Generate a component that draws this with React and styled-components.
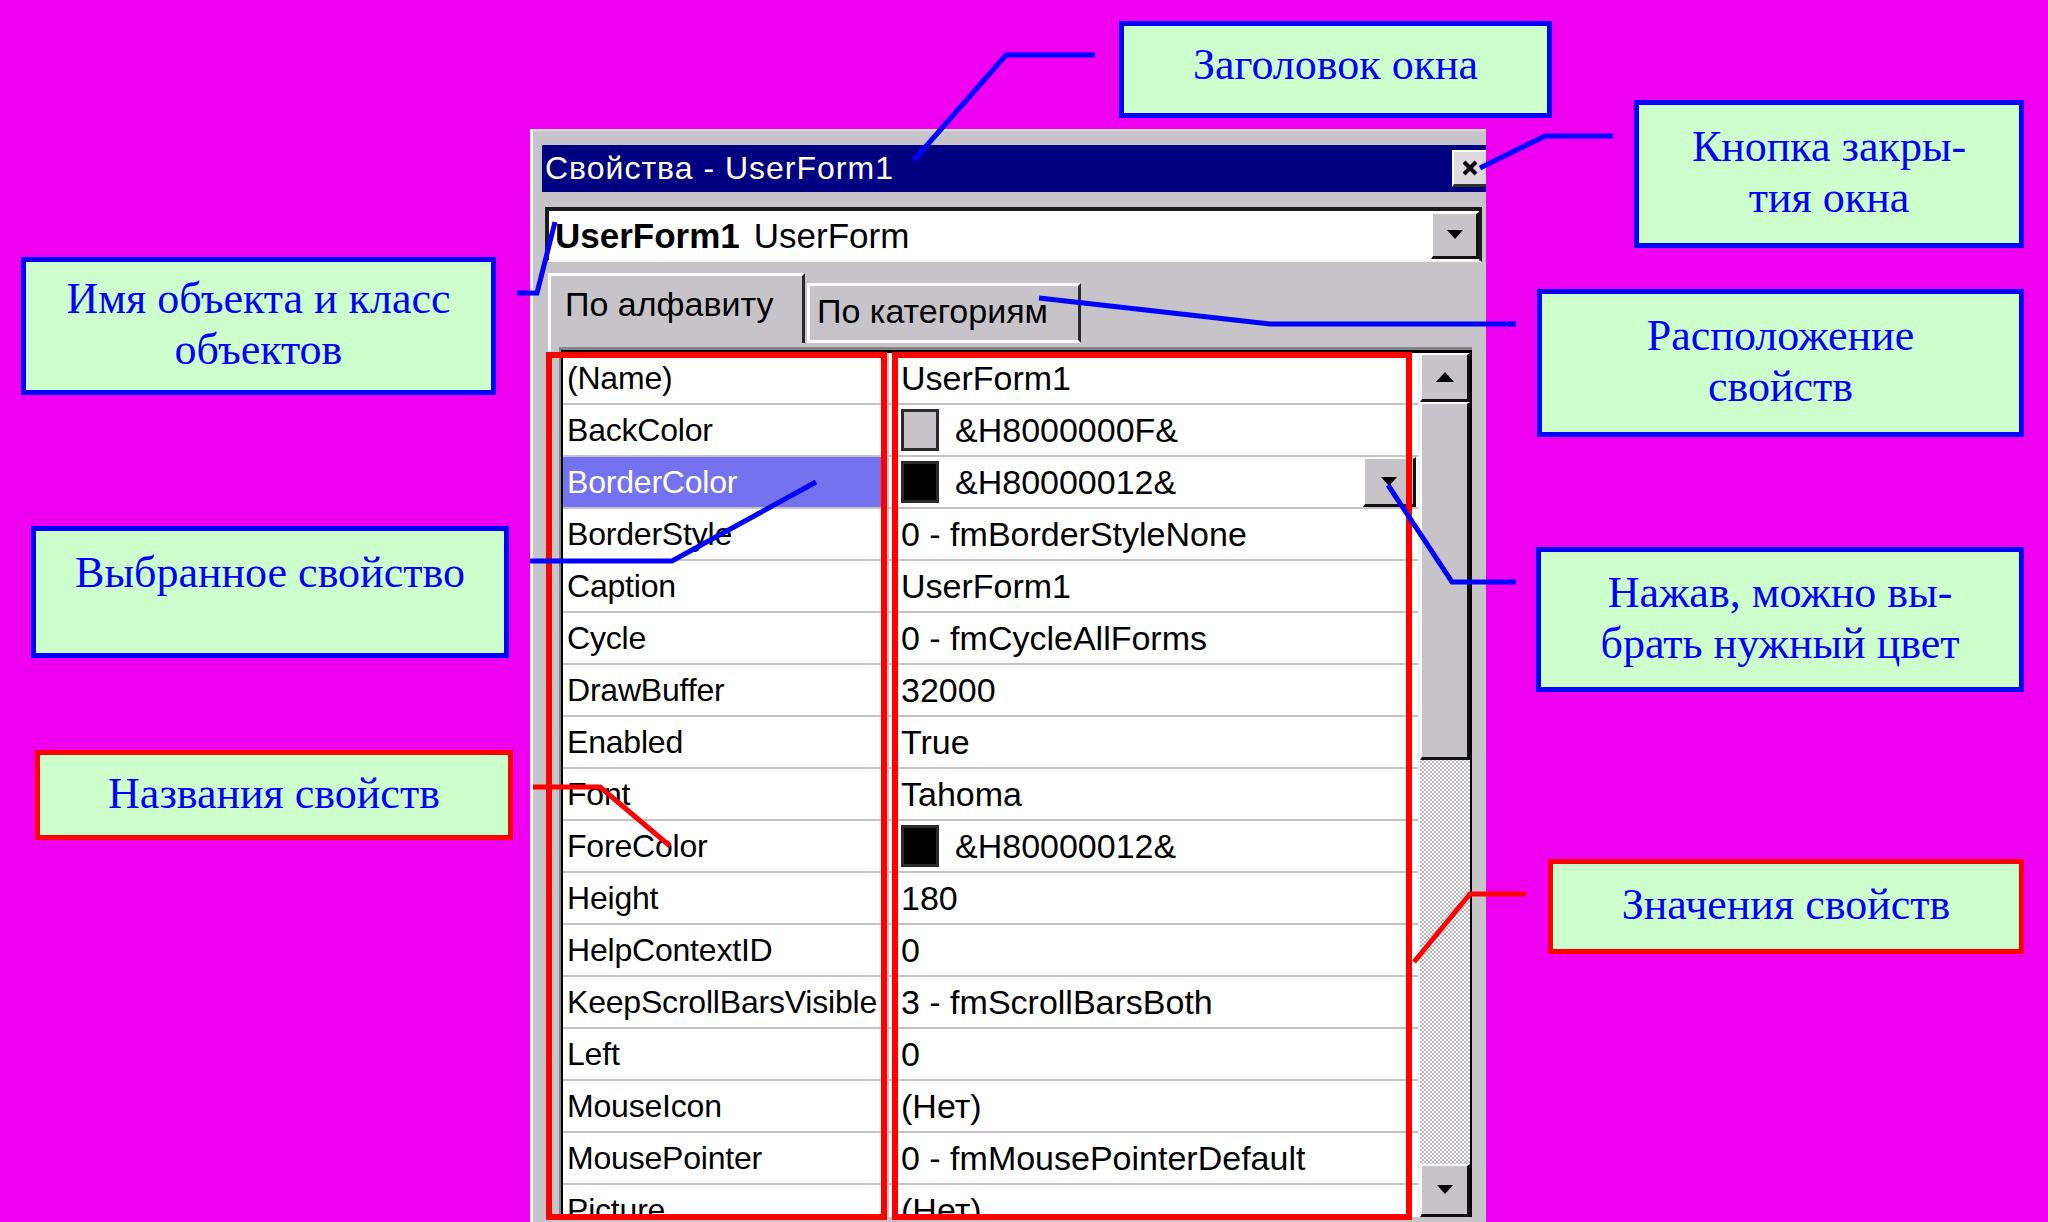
import React from 'react'
import styled, { createGlobalStyle } from 'styled-components'

const GlobalStyle = createGlobalStyle`
  html, body {
    margin: 0;
    padding: 0;
    background: #f000f0;
  }
  body {
    width: 2048px;
    height: 1222px;
    overflow: hidden;
  }
`

const ui = `"Liberation Sans", Arial, sans-serif`
const grey = '#c6c3c9'

const Stage = styled.div`
    position: relative;
    width: 2048px;
    height: 1222px;
    box-sizing: border-box;
    padding: 129px 0 0 530px;
    overflow: hidden;
    background: #f000f0;
`

const Window = styled.div`
    width: 956px;
    height: 1110px;
    box-sizing: border-box;
    display: flex;
    flex-direction: column;
    padding: 14px 0 0 9px;
    background: ${grey};
    border-top: 2px solid #dedce2;
    border-left: 3px solid #f4f3f6;
    font-family: ${ui};
    font-size: 34px;
    color: #000;
`

const TitleBar = styled.div`
    height: 47px;
    display: flex;
    align-items: center;
    justify-content: space-between;
    padding-left: 3px;
    background: #000080;
`

const TitleText = styled.span`
    color: #fff;
    font-size: 32px;
    letter-spacing: 1px;
    white-space: nowrap;
`

const CloseButton = styled.div`
    width: 34px;
    height: 37px;
    box-sizing: border-box;
    display: flex;
    align-items: center;
    justify-content: center;
    background: #dcdadf;
    border-top: 2px solid #fff;
    border-left: 2px solid #fff;
    border-bottom: 3px solid #303030;
`

const Combo = styled.div`
    height: 55px;
    margin: 15px 4px 0 3px;
    box-sizing: border-box;
    display: flex;
    align-items: center;
    background: #fff;
    font-size: 35px;
    border-top: 4px solid #1c1c1c;
    border-left: 4px solid #1c1c1c;
    border-right: 3px solid #1c1c1c;
    border-bottom: 2px solid #f4f3f6;
`

const ComboName = styled.span`
    padding-left: 6px;
    font-weight: 700;
    white-space: nowrap;
`

const ComboClass = styled.span`
    padding-left: 14px;
    white-space: nowrap;
`

const RaisedButton = styled.div`
    box-sizing: border-box;
    display: flex;
    align-items: center;
    justify-content: center;
    background: ${grey};
    border-top: 2px solid #fff;
    border-left: 2px solid #fff;
    border-right: 3px solid #111;
    border-bottom: 3px solid #111;
`

const ComboButton = styled(RaisedButton)`
    margin-left: auto;
    width: 48px;
    height: 47px;
`

const TabStrip = styled.div`
    height: 70px;
    margin: 11px 0 0 6px;
    display: flex;
    align-items: flex-end;
`

const Tab = styled.div`
    width: ${(p) => p.$w}px;
    height: ${(p) => (p.$active ? 70 : 60)}px;
    box-sizing: border-box;
    display: flex;
    align-items: center;
    padding: 0 0 ${(p) => (p.$active ? 10 : 4)}px ${(p) => (p.$active ? 14 : 7)}px;
    margin-left: ${(p) => (p.$active ? 0 : 2)}px;
    background: ${grey};
    border-top: 3px solid #fff;
    border-left: 3px solid #fff;
    border-right: 3px solid #2a2a2a;
    border-bottom: ${(p) => (p.$active ? 'none' : '3px solid #fff')};
    white-space: nowrap;
`

const Panel = styled.div`
    margin: 0 14px 0 6px;
    padding: 4px 0 0 8px;
    border-left: 3px solid #fff;
`

const Grid = styled.div`
    border-top: 3px solid #858288;
    border-left: 2px solid #858288;
`

const Frame = styled.div`
    height: 864px;
    display: flex;
    border-top: 3px solid #000;
    border-left: 2px solid #000;
    border-right: 2px solid #000;
    overflow: hidden;
`

const Table = styled.div`
    flex: 1;
    background: #fff;
    overflow: hidden;
`

const Row = styled.div`
    height: 52px;
    box-sizing: border-box;
    display: grid;
    grid-template-columns: 326px 1fr;
    border-bottom: 2px solid #c4c1c8;
`

const NameCell = styled.div`
    display: flex;
    align-items: center;
    padding-left: 4px;
    overflow: hidden;
    white-space: nowrap;
    font-size: 32px;
    letter-spacing: -0.2px;
    border-right: 3px solid #c4c1c8;
    background: ${(p) => (p.$selected ? '#7472ee' : '#fff')};
    color: ${(p) => (p.$selected ? '#fff' : '#000')};
`

const ValueCell = styled.div`
    display: flex;
    align-items: center;
    gap: 16px;
    padding-left: 12px;
    white-space: nowrap;
    overflow: hidden;
`

const Swatch = styled.span`
    width: 38px;
    height: 42px;
    box-sizing: border-box;
    flex-shrink: 0;
    background: ${(p) => p.$color};
    border: 3px solid #2a2a2a;
`

const CellButton = styled(RaisedButton)`
    margin-left: auto;
    margin-right: 2px;
    width: 53px;
    height: 50px;
`

const Scrollbar = styled.div`
    width: 50px;
    display: flex;
    flex-direction: column;
    background: repeating-conic-gradient(#ffffff 0 25%, #b9b6bd 0 50%) 0 0 / 4px 4px;
    border-left: 2px solid #f0eff2;
`

const ScrollButton = styled(RaisedButton)`
    height: ${(p) => p.$h}px;
    flex-shrink: 0;
`

const Thumb = styled(RaisedButton)`
    height: 358px;
    flex-shrink: 0;
`

const Track = styled.div`
    flex: 1;
`

const Callout = styled.div`
    position: absolute;
    left: ${(p) => p.$x}px;
    top: ${(p) => p.$y}px;
    width: ${(p) => p.$w}px;
    height: ${(p) => p.$h}px;
    box-sizing: border-box;
    display: flex;
    align-items: center;
    justify-content: center;
    padding-bottom: ${(p) => p.$lift || 4}px;
    background: #ccffcc;
    border: 5px solid ${(p) => (p.$tone === 'red' ? '#ff0000' : '#0000ff')};
    font-family: "Liberation Serif", "Times New Roman", serif;
    font-size: 44px;
    line-height: 51px;
    color: #0000ff;
    text-align: center;
    white-space: pre-line;
`

const Overlay = styled.svg`
    position: absolute;
    left: 0;
    top: 0;
    width: 2048px;
    height: 1222px;
    pointer-events: none;
`

const DownArrow = () => (
    <svg width="16" height="10" viewBox="0 0 16 10">
        <polygon points="0,0 16,0 8,9" fill="#000" />
    </svg>
)

const UpArrow = () => (
    <svg width="18" height="10" viewBox="0 0 18 10">
        <polygon points="0,10 18,10 9,0" fill="#000" />
    </svg>
)

const CloseIcon = () => (
    <svg width="16" height="16" viewBox="0 0 16 16">
        <path d="M2 2 L14 14 M14 2 L2 14" stroke="#000" strokeWidth="4" />
    </svg>
)

const properties = [
    { name: '(Name)', value: 'UserForm1' },
    { name: 'BackColor', value: '&H8000000F&', swatch: '#c6c3c9' },
    { name: 'BorderColor', value: '&H80000012&', swatch: '#000', selected: true },
    { name: 'BorderStyle', value: '0 - fmBorderStyleNone' },
    { name: 'Caption', value: 'UserForm1' },
    { name: 'Cycle', value: '0 - fmCycleAllForms' },
    { name: 'DrawBuffer', value: '32000' },
    { name: 'Enabled', value: 'True' },
    { name: 'Font', value: 'Tahoma' },
    { name: 'ForeColor', value: '&H80000012&', swatch: '#000' },
    { name: 'Height', value: '180' },
    { name: 'HelpContextID', value: '0' },
    { name: 'KeepScrollBarsVisible', value: '3 - fmScrollBarsBoth' },
    { name: 'Left', value: '0' },
    { name: 'MouseIcon', value: '(Нет)' },
    { name: 'MousePointer', value: '0 - fmMousePointerDefault' },
    { name: 'Picture', value: '(Нет)' },
]

const callouts = [
    { text: 'Заголовок окна', x: 1119, y: 21, w: 433, h: 97, lift: 10 },
    { text: 'Кнопка закры-\nтия окна', x: 1634, y: 100, w: 390, h: 148 },
    { text: 'Имя объекта и класс\nобъектов', x: 21, y: 257, w: 475, h: 138 },
    { text: 'Расположение\nсвойств', x: 1537, y: 289, w: 487, h: 148 },
    { text: 'Выбранное свойство', x: 31, y: 526, w: 478, h: 132, lift: 40 },
    { text: 'Нажав, можно вы-\nбрать нужный цвет', x: 1536, y: 547, w: 488, h: 145 },
    { text: 'Названия свойств', x: 35, y: 750, w: 478, h: 90, tone: 'red' },
    { text: 'Значения свойств', x: 1548, y: 859, w: 476, h: 95, tone: 'red' },
]

const leaders = [
    { points: '1095,55 1006,55 914,160', color: '#0000ff' },
    { points: '1613,136 1545,136 1480,168', color: '#0000ff' },
    { points: '517,293 537,293 555,222', color: '#0000ff' },
    { points: '1516,324 1270,324 1039,298', color: '#0000ff' },
    { points: '530,561 672,561 816,482', color: '#0000ff' },
    { points: '1516,582 1452,582 1388,485', color: '#0000ff' },
    { points: '533,787 600,787 670,846', color: '#ff0000' },
    { points: '1526,894 1470,894 1414,962', color: '#ff0000' },
]

const PropertyRow = ({ item }) => (
    <Row>
        <NameCell $selected={item.selected}>{item.name}</NameCell>
        <ValueCell>
            {item.swatch && <Swatch $color={item.swatch} />}
            <span>{item.value}</span>
            {item.selected && (
                <CellButton>
                    <DownArrow />
                </CellButton>
            )}
        </ValueCell>
    </Row>
)

const App = () => {
    return (
        <Stage>
            <GlobalStyle />
            <Window>
                <TitleBar>
                    <TitleText>Свойства - UserForm1</TitleText>
                    <CloseButton>
                        <CloseIcon />
                    </CloseButton>
                </TitleBar>
                <Combo>
                    <ComboName>UserForm1</ComboName>
                    <ComboClass>UserForm</ComboClass>
                    <ComboButton>
                        <DownArrow />
                    </ComboButton>
                </Combo>
                <TabStrip>
                    <Tab $active $w={257}>По алфавиту</Tab>
                    <Tab $w={274}>По категориям</Tab>
                </TabStrip>
                <Panel>
                    <Grid>
                        <Frame>
                            <Table>
                                {properties.map((item) => (
                                    <PropertyRow item={item} key={item.name} />
                                ))}
                            </Table>
                            <Scrollbar>
                                <ScrollButton $h={49}>
                                    <UpArrow />
                                </ScrollButton>
                                <Thumb />
                                <Track />
                                <ScrollButton $h={53}>
                                    <DownArrow />
                                </ScrollButton>
                            </Scrollbar>
                        </Frame>
                    </Grid>
                </Panel>
            </Window>

            {callouts.map((c) => (
                <Callout key={c.text} $x={c.x} $y={c.y} $w={c.w} $h={c.h} $lift={c.lift} $tone={c.tone}>
                    {c.text}
                </Callout>
            ))}

            <Overlay viewBox="0 0 2048 1222">
                <rect x="549" y="355" width="335" height="862" fill="none" stroke="#ff0000" strokeWidth="6" />
                <rect x="895" y="355" width="514" height="862" fill="none" stroke="#ff0000" strokeWidth="6" />
                {leaders.map((l) => (
                    <polyline key={l.points} points={l.points} fill="none" stroke={l.color} strokeWidth="5" />
                ))}
            </Overlay>
        </Stage>
    )
}

export default App
